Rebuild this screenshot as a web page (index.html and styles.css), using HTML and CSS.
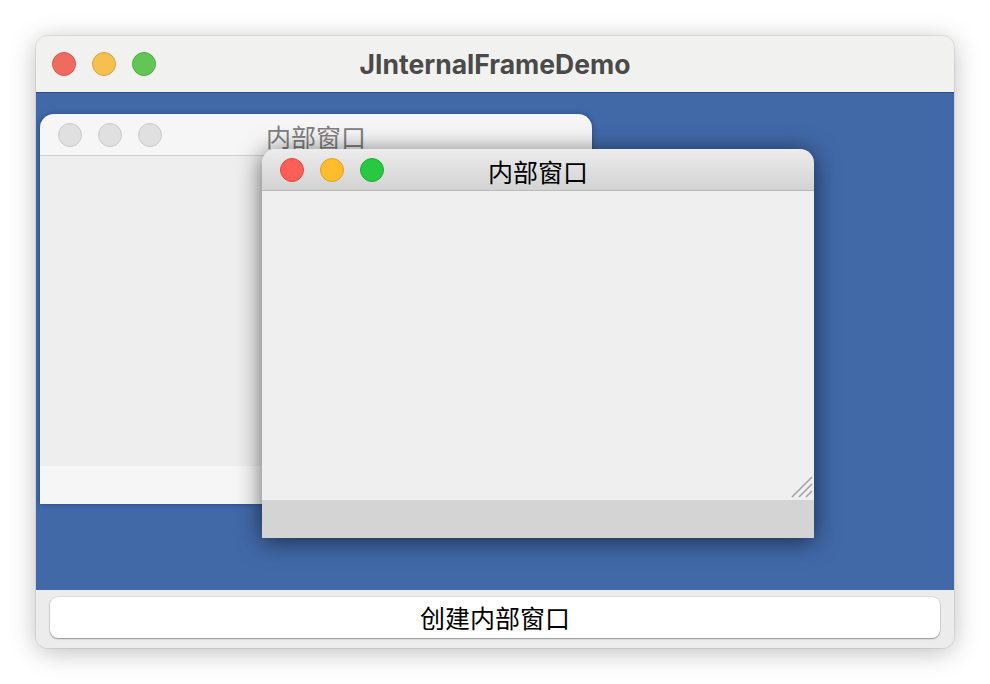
FILE: index.html
```html
<!DOCTYPE html>
<html lang="zh">
<head>
<meta charset="utf-8">
<title>JInternalFrameDemo</title>
<link rel="stylesheet" href="styles.css">
</head>
<body>
<div class="window">
  <div class="titlebar">
    <div class="lights">
      <span class="light red"></span>
      <span class="light yellow"></span>
      <span class="light green"></span>
    </div>
    <div class="title">JInternalFrameDemo</div>
    <div></div>
  </div>
  <div class="desktop">
    <div class="frame back">
      <div class="ftitle">
        <div class="lights">
          <span class="light gray"></span>
          <span class="light gray"></span>
          <span class="light gray"></span>
        </div>
        <div class="ftext">内部窗口</div>
        <div></div>
      </div>
      <div class="fbody"></div>
      <div class="fstrip"></div>
    </div>
    <div class="frame front">
      <div class="ftitle">
        <div class="lights">
          <span class="light fred"></span>
          <span class="light fyellow"></span>
          <span class="light fgreen"></span>
        </div>
        <div class="ftext">内部窗口</div>
        <div></div>
      </div>
      <div class="fbody">
        <svg class="grip" width="22" height="22" viewBox="0 0 22 22">
          <line x1="1" y1="21" x2="21" y2="1"/>
          <line x1="8" y1="21" x2="21" y2="8"/>
          <line x1="15" y1="21" x2="21" y2="15"/>
        </svg>
      </div>
      <div class="fstrip"></div>
    </div>
  </div>
  <div class="bottom">
    <button class="btn">创建内部窗口</button>
  </div>
</div>
</body>
</html>
```

FILE: styles.css
```css
html, body {
  margin: 0;
  padding: 0;
  background: #ffffff;
}
body {
  padding: 36px;
  font-family: "Noto Sans CJK SC", "Noto Sans", sans-serif;
}
.window {
  width: 918px;
  height: 612px;
  border-radius: 12px;
  overflow: hidden;
  box-shadow: 0 4px 26px rgba(0,0,0,0.26), 0 0 0 1px rgba(0,0,0,0.07);
  display: flex;
  flex-direction: column;
  background: #ececec;
}
.titlebar {
  height: 56px;
  flex: none;
  background: #f1f1ef;
  display: grid;
  grid-template-columns: 1fr auto 1fr;
  align-items: center;
  padding-left: 16px;
  padding-right: 16px;
}
.lights {
  display: flex;
  gap: 16px;
}
.light {
  width: 24px;
  height: 24px;
  border-radius: 50%;
  box-sizing: border-box;
  display: block;
}
.red { background: #ee6b60; border: 1px solid #d8594f; }
.yellow { background: #f5c04f; border: 1px solid #dca63c; }
.green { background: #62c555; border: 1px solid #4fab43; }
.gray { background: #e0e0e0; border: 1px solid #cacaca; }
.fred { background: #ff5f57; border: 1px solid #e5463f; }
.fyellow { background: #ffbd2e; border: 1px solid #e2a01b; }
.fgreen { background: #28c840; border: 1px solid #1fad33; }
.title {
  font-family: Inter, "Liberation Sans", sans-serif;
  font-weight: 700;
  font-size: 26.5px;
  color: #4a4a4a;
  margin-top: -1px;
}
.desktop {
  flex: none;
  height: 497px;
  background: #4169a8;
  border-top: 1px solid #2b4e88;
  position: relative;
}
.frame {
  position: absolute;
  width: 552px;
  display: flex;
  flex-direction: column;
  border-radius: 14px 14px 0 0;
}
.frame.back {
  left: 4px;
  top: 21px;
  height: 390px;
  box-shadow: 0 0 5px rgba(20,40,80,0.55);
}
.frame.front {
  left: 226px;
  top: 56px;
  height: 389px;
  box-shadow: 0 3px 24px rgba(0,0,0,0.6);
}
.ftitle {
  flex: none;
  height: 41px;
  border-bottom: 1px solid #c6c6c6;
  border-radius: 14px 14px 0 0;
  display: grid;
  grid-template-columns: 1fr auto 1fr;
  align-items: center;
  padding-left: 18px;
  padding-right: 18px;
}
.back .ftitle {
  background: #f6f6f6;
  border-bottom-color: #d0d0d0;
}
.front .ftitle {
  background: linear-gradient(#ececec, #d3d3d3);
  border-bottom-color: #b9b9b9;
}
.ftext {
  font-size: 25px;
  line-height: 30px;
  padding-top: 2px;
}
.back .ftext { color: #808080; }
.front .ftext { color: #000000; }
.fbody {
  flex: 1;
  background: #eeeeee;
  position: relative;
}
.front .fbody { background: #efefef; }
.fstrip {
  flex: none;
  height: 38px;
}
.back .fstrip { background: #f6f6f6; }
.front .fstrip { background: #d4d4d4; }
.grip {
  position: absolute;
  right: 1px;
  bottom: 2px;
}
.grip line {
  stroke: #a2a2a2;
  stroke-width: 1.6;
}
.bottom {
  flex: 1;
  background: #ececec;
  padding: 7px 14px 0 14px;
}
.btn {
  display: block;
  width: 100%;
  height: 41px;
  border: none;
  border-radius: 8px;
  background: #ffffff;
  box-shadow: 0 1px 1.5px rgba(0,0,0,0.35), 0 0 0 0.5px rgba(0,0,0,0.12);
  font-family: "Noto Sans CJK SC", "Noto Sans", sans-serif;
  font-size: 25px;
  color: #000000;
  padding: 0;
  line-height: 39px;
}
```
